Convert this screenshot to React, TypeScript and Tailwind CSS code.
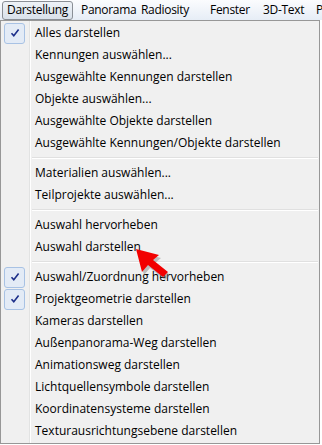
import React from 'react';

type Item = { label?: string; checked?: boolean; sep?: boolean };

const items: Item[] = [
  { label: 'Alles darstellen', checked: true },
  { label: 'Kennungen auswählen...' },
  { label: 'Ausgewählte Kennungen darstellen' },
  { label: 'Objekte auswählen...' },
  { label: 'Ausgewählte Objekte darstellen' },
  { label: 'Ausgewählte Kennungen/Objekte darstellen' },
  { sep: true },
  { label: 'Materialien auswählen...' },
  { label: 'Teilprojekte auswählen...' },
  { sep: true },
  { label: 'Auswahl hervorheben' },
  { label: 'Auswahl darstellen' },
  { sep: true },
  { label: 'Auswahl/Zuordnung hervorheben', checked: true },
  { label: 'Projektgeometrie darstellen', checked: true },
  { label: 'Kameras darstellen' },
  { label: 'Außenpanorama-Weg darstellen' },
  { label: 'Animationsweg darstellen' },
  { label: 'Lichtquellensymbole darstellen' },
  { label: 'Koordinatensysteme darstellen' },
  { label: 'Texturausrichtungsebene darstellen' },
];

const Check = () => (
  <div className="flex h-[21px] w-[21px] items-center justify-center rounded-[3px] border border-[#a8c2e4] bg-[#e3ebf6]">
    <svg width="10" height="10" viewBox="0 0 10 10" aria-hidden="true">
      <path d="M1.5 5.2 L3.8 7.8 L8.6 1.6" fill="none" stroke="#1d2f8a" strokeWidth="1.6" />
    </svg>
  </div>
);

export default function App() {
  return (
    <div className="relative h-[445px] w-[322px] overflow-hidden bg-white text-[12px] text-black [font-family:'Open_Sans','Noto_Sans',sans-serif]">
      {/* menu bar */}
      <div className="flex h-[20px] items-center overflow-hidden whitespace-nowrap bg-[linear-gradient(#fbfcfe,#e6edf6)] pl-[2px] tracking-[-0.3px]">
        <div className="flex h-[19px] w-[71px] shrink-0 items-center justify-center rounded-[3px] border border-[#8a8f96] bg-[linear-gradient(#eef2f7,#d9e1ea)] pb-px">
          Darstellung
        </div>
        <span className="ml-[8px] w-[60px] shrink-0">Panorama</span>
        <span className="w-[69px] shrink-0">Radiosity</span>
        <span className="w-[53px] shrink-0">Fenster</span>
        <span className="w-[53px] shrink-0">3D-Text</span>
        <span className="shrink-0">P</span>
      </div>

      {/* dropdown */}
      <div className="flex w-[320px] flex-col border border-[#979797] bg-[linear-gradient(to_right,#f0f0f0_28px,#e2e3e3_28px,#e2e3e3_29px,#ffffff_29px,#ffffff_30px,#f0f0f0_30px)] py-px pl-[2px]">
        {items.map((it, i) =>
          it.sep ? (
            <div key={i} className="flex h-[8px] flex-col justify-center pl-[29px] pr-[1px]">
              <div className="h-px bg-[#e0e0e0]" />
              <div className="h-px bg-white" />
            </div>
          ) : (
            <div key={i} className="flex h-[22px] items-center">
              <div className="flex w-[32px] items-center pl-px">{it.checked && <Check />}</div>
              <span className="whitespace-nowrap">{it.label}</span>
            </div>
          )
        )}
      </div>

      {/* red arrow annotation */}
      <svg className="absolute left-[130px] top-[244px]" width="45" height="40" viewBox="0 0 45 40" aria-hidden="true">
        <path d="M6 5 L29 11 L23 16 L38 28 L33 33 L18 21 L12 28 Z" fill="#6e6e6e" opacity="0.4" transform="translate(2 3)" />
        <path d="M6 5 L29 11 L23 16 L38 28 L33 33 L18 21 L12 28 Z" fill="#f20000" />
      </svg>
    </div>
  );
}
